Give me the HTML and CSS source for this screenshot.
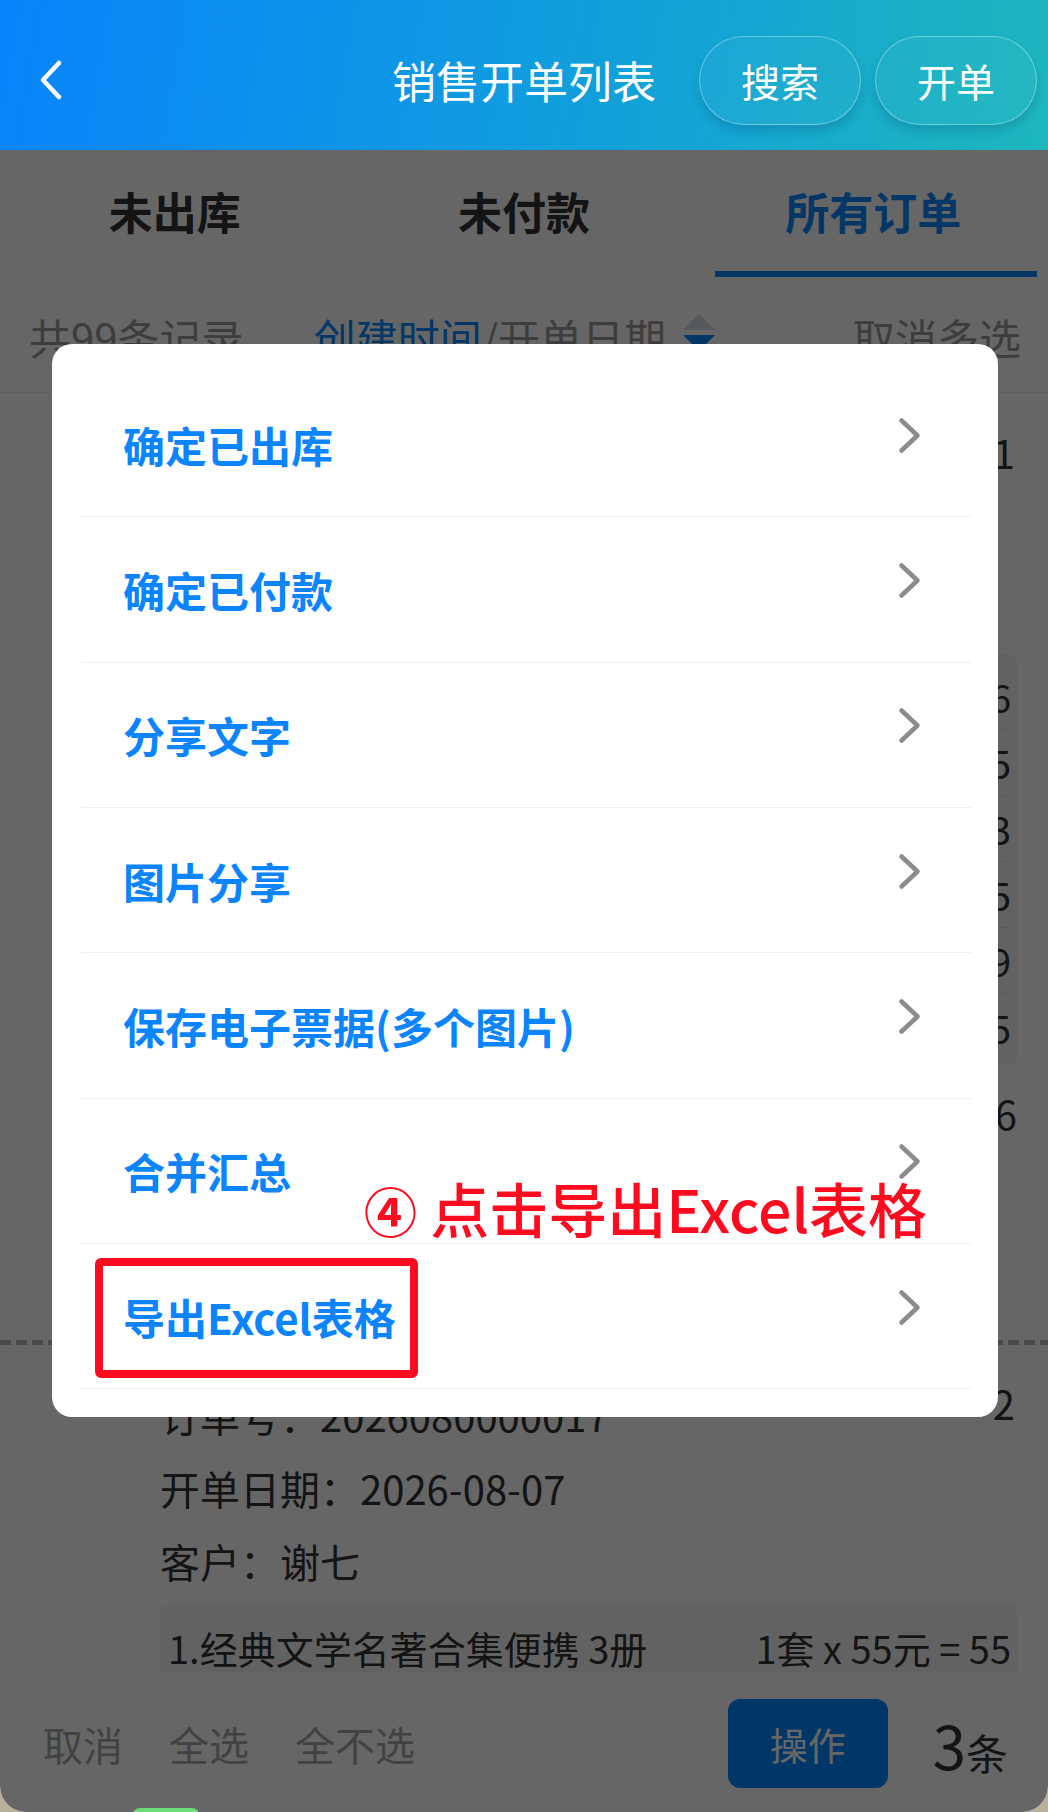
FILE: index.html
```html
<!DOCTYPE html>
<html lang="zh-CN">
<head>
<meta charset="utf-8">
<title>销售开单列表</title>
<link rel="stylesheet" href="styles.css">
</head>
<body>
<div class="screen">
  <header class="topbar">
    <div class="topbar-left">
      <svg class="back" viewBox="0 0 26 42" aria-hidden="true"><polyline points="20,4 4,21 20,38" fill="none" stroke="#fff" stroke-width="4.5" stroke-linecap="round" stroke-linejoin="round"/></svg>
    </div>
    <h1 class="title">销售开单列表</h1>
    <div class="topbar-right">
      <button class="pill">搜索</button>
      <button class="pill">开单</button>
    </div>
  </header>

  <nav class="tabs">
    <div class="tab">未出库</div>
    <div class="tab">未付款</div>
    <div class="tab active">所有订单</div>
  </nav>

  <div class="filter">
    <span class="count">共99条记录</span>
    <span class="sort"><span class="sort-on">创建时间</span>/开单日期<span class="sort-icon"><i class="tri-up"></i><i class="tri-down"></i></span></span>
    <span class="multi">取消多选</span>
  </div>

  <main class="list">
    <section class="card card-first">
      <div class="line head"><span>订单号：2026080000018</span><span class="idx">1</span></div>
      <div class="line">开单日期：2026-08-07</div>
      <div class="line">客户：王五</div>
      <div class="goods">
        <div class="good"><span>1.儿童科普百科全书 全8册</span><span>2套 x 88元 = 176</span></div>
        <div class="good"><span>2.经典文学名著合集便携 3册</span><span>1套 x 55元 = 55</span></div>
        <div class="good"><span>3.中华上下五千年 彩图版</span><span>1套 x 63元 = 63</span></div>
        <div class="good"><span>4.小学生必背古诗词</span><span>3本 x 15元 = 45</span></div>
        <div class="good"><span>5.新华字典 第12版</span><span>1本 x 39元 = 39</span></div>
        <div class="good"><span>6.唐诗三百首 注音版</span><span>5本 x 15元 = 75</span></div>
      </div>
      <div class="line total"><span>合计金额：453元</span><span>商品种类：6</span></div>
      <div class="line">备注：无</div>
    </section>
    <div class="dash"></div>
    <section class="card">
      <div class="line head"><span>订单号：2026080000017</span><span class="idx">2</span></div>
      <div class="line">开单日期：2026-08-07</div>
      <div class="line">客户：谢七</div>
      <div class="goods">
        <div class="good"><span>1.经典文学名著合集便携 3册</span><span>1套 x 55元 = 55</span></div>
        <div class="good"><span>2.小学生必背古诗词</span><span>1本 x 15元 = 15</span></div>
      </div>
    </section>
  </main>

  <footer class="bar">
    <span class="bar-link">取消</span>
    <span class="bar-link">全选</span>
    <span class="bar-link">全不选</span>
    <button class="op">操作</button>
    <span class="sum"><b>3</b><span>条</span></span>
  </footer>

  <div class="mask"></div>
  <div class="handle"></div>

  <div class="sheet">
    <div class="sheet-row"><span>确定已出库</span><svg class="chev" viewBox="0 0 23 37" aria-hidden="true"><polyline points="3.5,3.5 19.5,18.5 3.5,33.5" fill="none" stroke="#8c8c8c" stroke-width="4.5" stroke-linecap="round" stroke-linejoin="round"/></svg></div>
    <div class="sheet-row"><span>确定已付款</span><svg class="chev" viewBox="0 0 23 37" aria-hidden="true"><polyline points="3.5,3.5 19.5,18.5 3.5,33.5" fill="none" stroke="#8c8c8c" stroke-width="4.5" stroke-linecap="round" stroke-linejoin="round"/></svg></div>
    <div class="sheet-row"><span>分享文字</span><svg class="chev" viewBox="0 0 23 37" aria-hidden="true"><polyline points="3.5,3.5 19.5,18.5 3.5,33.5" fill="none" stroke="#8c8c8c" stroke-width="4.5" stroke-linecap="round" stroke-linejoin="round"/></svg></div>
    <div class="sheet-row"><span>图片分享</span><svg class="chev" viewBox="0 0 23 37" aria-hidden="true"><polyline points="3.5,3.5 19.5,18.5 3.5,33.5" fill="none" stroke="#8c8c8c" stroke-width="4.5" stroke-linecap="round" stroke-linejoin="round"/></svg></div>
    <div class="sheet-row"><span>保存电子票据(多个图片)</span><svg class="chev" viewBox="0 0 23 37" aria-hidden="true"><polyline points="3.5,3.5 19.5,18.5 3.5,33.5" fill="none" stroke="#8c8c8c" stroke-width="4.5" stroke-linecap="round" stroke-linejoin="round"/></svg></div>
    <div class="sheet-row"><span>合并汇总</span><svg class="chev" viewBox="0 0 23 37" aria-hidden="true"><polyline points="3.5,3.5 19.5,18.5 3.5,33.5" fill="none" stroke="#8c8c8c" stroke-width="4.5" stroke-linecap="round" stroke-linejoin="round"/></svg></div>
    <div class="sheet-row"><span>导出Excel表格</span><svg class="chev" viewBox="0 0 23 37" aria-hidden="true"><polyline points="3.5,3.5 19.5,18.5 3.5,33.5" fill="none" stroke="#8c8c8c" stroke-width="4.5" stroke-linecap="round" stroke-linejoin="round"/></svg></div>
  </div>

  <div class="note"><span class="note-num">④</span> 点击导出Excel表格</div>
  <div class="highlight"></div>
</div>
</body>
</html>
```

FILE: styles.css
```css
body {
  margin: 0;
  background: #b9ae98;
  font-family: "Noto Sans CJK SC", "Noto Sans", sans-serif;
}

.screen {
  position: relative;
  width: 1048px;
  height: 1812px;
  overflow: hidden;
  border-radius: 0 0 26px 26px;
  background: #fff;
  display: flex;
  flex-direction: column;
}

/* header */
.topbar {
  flex: none;
  height: 150px;
  box-sizing: border-box;
  padding-top: 10px;
  display: grid;
  grid-template-columns: 1fr auto 1fr;
  align-items: center;
  background: linear-gradient(100deg, #0784fb 0%, #11a0da 58%, #1db7bd 100%);
  color: #fff;
}
.topbar-left {
  padding-left: 39px;
  display: flex;
  align-items: center;
}
.back {
  width: 26px;
  height: 42px;
}
.title {
  margin: 0;
  font-size: 44px;
  font-weight: 400;
  line-height: 1;
}
.topbar-right {
  display: flex;
  justify-content: flex-end;
  gap: 14px;
  padding-right: 11px;
}
.pill {
  width: 162px;
  height: 89px;
  padding: 0;
  border-radius: 45px;
  border: 1.5px solid rgba(255, 255, 255, 0.35);
  background: rgba(255, 255, 255, 0.03);
  box-shadow: 0 6px 10px rgba(0, 40, 90, 0.18);
  color: #fff;
  font: 400 39px/1 "Noto Sans CJK SC", sans-serif;
}

/* tabs */
.tabs {
  flex: none;
  height: 127px;
  display: grid;
  grid-template-columns: repeat(3, 1fr);
}
.tab {
  display: flex;
  flex-direction: column;
  align-items: center;
  box-sizing: border-box;
  padding-top: 39px;
  font-size: 44px;
  line-height: 44px;
  font-weight: 700;
  color: #333;
}
.tab.active {
  color: #0a8aff;
}
.tab.active::after {
  content: "";
  width: 322px;
  height: 6px;
  margin: auto 0 0 6px;
  background: #0a8aff;
}

/* filter */
.filter {
  flex: none;
  height: 116px;
  box-sizing: border-box;
  padding: 6px 27px 0 29px;
  display: flex;
  align-items: center;
  border-bottom: 1px solid #eee;
  font-size: 42px;
  line-height: 1.2;
  color: #999;
}
.sort {
  margin-left: 70px;
  display: flex;
  align-items: center;
}
.sort-on {
  color: #0a8aff;
}
.sort-icon {
  display: flex;
  flex-direction: column;
  gap: 5px;
  margin: 0 0 10px 17px;
}
.tri-up {
  width: 0;
  height: 0;
  border-left: 16px solid transparent;
  border-right: 16px solid transparent;
  border-bottom: 16px solid #d4dbe6;
}
.tri-down {
  width: 0;
  height: 0;
  border-left: 16px solid transparent;
  border-right: 16px solid transparent;
  border-top: 16px solid #0a8aff;
}
.multi {
  margin-left: auto;
}

/* list */
.list {
  flex: 1;
  min-height: 0;
  overflow: hidden;
}
.card {
  padding: 34px 31px 0 160px;
  font-size: 40px;
  color: #333;
}
.card-first {
  padding-top: 35px;
  padding-bottom: 117px;
}
.line {
  height: 73px;
  line-height: 73px;
  white-space: nowrap;
}
.head {
  display: flex;
  justify-content: space-between;
  align-items: flex-start;
}
.idx {
  line-height: 49px;
  padding-right: 2px;
}
.goods {
  margin-top: 7px;
  background: #f5f5f5;
  border-radius: 8px;
  padding: 10px 6px 5px 8px;
  font-size: 38px;
}
.good {
  display: flex;
  justify-content: space-between;
  align-items: center;
  height: 66px;
  box-sizing: border-box;
  border-bottom: 1px solid #e4e4e4;
  white-space: nowrap;
}
.good:last-child {
  border-bottom: 0;
}
.total {
  margin-top: 12px;
  display: flex;
  justify-content: space-between;
}
.dash {
  height: 5px;
  background: repeating-linear-gradient(90deg, #bababa 0 11px, transparent 11px 16px);
}

/* bottom bar */
.bar {
  flex: none;
  height: 139px;
  box-sizing: border-box;
  padding: 2px 40px 0 43px;
  display: flex;
  align-items: center;
  background: #fff;
}
.bar-link {
  font-size: 40px;
  color: #a6a6a6;
  margin-right: 46px;
}
.op {
  margin-left: auto;
  width: 160px;
  height: 89px;
  border: 0;
  border-radius: 12px;
  background: #008aff;
  color: #fff;
  font: 400 38px/1 "Noto Sans CJK SC", sans-serif;
}
.sum {
  margin-left: 45px;
  color: #333;
  display: flex;
  align-items: baseline;
}
.sum b {
  font-size: 60px;
  font-weight: 400;
}
.sum span {
  font-size: 42px;
}

/* overlay layers */
.mask {
  position: absolute;
  left: 0;
  right: 0;
  top: 150px;
  bottom: 0;
  background: rgba(0, 0, 0, 0.6);
}
.handle {
  position: absolute;
  left: 133px;
  top: 1808px;
  width: 66px;
  height: 14px;
  border-radius: 8px;
  background: #6cdc7a;
}
.sheet {
  position: absolute;
  left: 52px;
  top: 344px;
  width: 946px;
  box-sizing: border-box;
  padding: 28px 27px 28px 29px;
  background: #fff;
  border-radius: 20px;
}
.sheet-row {
  height: 145.33px;
  box-sizing: border-box;
  border-bottom: 1px solid #efefef;
  display: flex;
  align-items: center;
  justify-content: space-between;
  padding: 0 50px 0 42px;
  font-size: 42px;
  font-weight: 700;
  color: #0a84ff;
}
.chev {
  width: 23px;
  height: 37px;
  margin-bottom: 18px;
}
.note {
  position: absolute;
  left: 364px;
  top: 1178px;
  font-size: 59px;
  line-height: 60px;
  font-weight: 500;
  color: #ff0a1f;
  white-space: nowrap;
}
.note-num {
  font-size: 53px;
  font-weight: 700;
}
.highlight {
  position: absolute;
  left: 95px;
  top: 1258px;
  width: 323px;
  height: 120px;
  box-sizing: border-box;
  border: 8px solid #ff0a1f;
  border-radius: 6px;
}
```
